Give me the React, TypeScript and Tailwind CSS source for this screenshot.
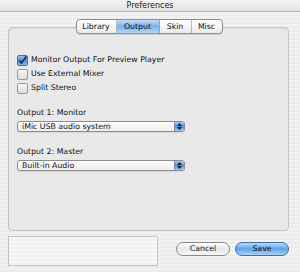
import React from 'react';

const font = { fontFamily: '"DejaVu Sans", "Liberation Sans", sans-serif' };

const Checkbox = ({ checked, label }: { checked?: boolean; label: string }) => (
  <div className="flex items-center h-[14px]">
    {checked ? (
      <svg width="11" height="11" viewBox="0 0 11 11" className="shrink-0">
        <defs>
          <linearGradient id="cb" x1="0" y1="0" x2="0" y2="1">
            <stop offset="0" stopColor="#9cc4f0" />
            <stop offset="0.5" stopColor="#4d8fe0" />
            <stop offset="1" stopColor="#8fc0f2" />
          </linearGradient>
        </defs>
        <rect x="0.5" y="0.5" width="10" height="10" rx="1.5" fill="url(#cb)" stroke="#4a6f9c" />
        <path d="M2.3 5.6 L4.4 8.2 L9.4 1.2" fill="none" stroke="#1b2a44" strokeWidth="1.6" />
      </svg>
    ) : (
      <div className="w-[11px] h-[11px] shrink-0 rounded-[2px] border border-[#9a9a9a] bg-gradient-to-b from-[#f6f6f6] to-[#dcdcdc]" />
    )}
    <span className="ml-[3px] text-[7.8px] text-[#111]">{label}</span>
  </div>
);

const Popup = ({ value }: { value: string }) => (
  <div className="flex items-center w-[168px] h-[11px] rounded-[3px] border border-[#8c8c8c] bg-gradient-to-b from-[#fdfdfd] to-[#eeeeee] shadow-[0_1px_0_#d8d8d8]">
    <span className="flex-1 pl-[4px] text-[7.8px] text-[#111] leading-none">{value}</span>
    <div className="w-[10px] h-full rounded-r-[2px] bg-gradient-to-b from-[#a6cdf4] via-[#4f92e2] to-[#9ccaf4] border-l border-[#6d8fb8] flex flex-col items-center justify-center gap-[1px]">
      <svg width="5" height="3" viewBox="0 0 5 3"><path d="M0 3 L2.5 0 L5 3Z" fill="#152238" /></svg>
      <svg width="5" height="3" viewBox="0 0 5 3"><path d="M0 0 L2.5 3 L5 0Z" fill="#152238" /></svg>
    </div>
  </div>
);

export default function App() {
  return (
    <div
      style={font}
      className="w-[300px] h-[272px] overflow-hidden flex flex-col bg-[repeating-linear-gradient(0deg,#ececec_0px,#ececec_2px,#f2f2f2_2px,#f2f2f2_4px)]"
    >
      <div className="h-[12px] shrink-0 flex items-center justify-center bg-gradient-to-b from-[#f4f4f4] to-[#e2e2e2] border-b border-[#b4b4b4]">
        <span className="text-[8px] text-[#222] leading-none">Preferences</span>
      </div>

      <div className="ml-[8px] mt-[15px] w-[281px] h-[204px] shrink-0 rounded-[4px] border border-[#c4c4c4] bg-[#e9e9e9] shadow-[inset_0_1px_2px_rgba(0,0,0,0.06)] flex flex-col">
        <div className="-mt-[9px] flex justify-center">
          <div className="flex ml-[1px] h-[15px] rounded-[4px] border border-[#8e8e8e] bg-gradient-to-b from-[#ffffff] to-[#ececec] text-[7.8px] text-[#111] overflow-hidden shadow-[0_1px_0_#cfcfcf]">
            <div className="w-[40px] flex items-center justify-center border-r border-[#b9b9b9]">Library</div>
            <div className="w-[43px] flex items-center justify-center bg-gradient-to-b from-[#c5def8] via-[#79b1ec] to-[#b6d6f7] border-r border-[#8aa7c8]">Output</div>
            <div className="w-[32px] flex items-center justify-center border-r border-[#b9b9b9]">Skin</div>
            <div className="w-[30px] flex items-center justify-center">Misc</div>
          </div>
        </div>

        <div className="pl-[8px] pt-[19px] flex flex-col">
          <Checkbox checked label="Monitor Output For Preview Player" />
          <Checkbox label="Use External Mixer" />
          <Checkbox label="Split Stereo" />

          <div className="mt-[13px] text-[7.8px] text-[#111] h-[10px] leading-[10px]">Output 1: Monitor</div>
          <div className="mt-[3px]">
            <Popup value="iMic USB audio system" />
          </div>

          <div className="mt-[15px] text-[7.8px] text-[#111] h-[10px] leading-[10px]">Output 2: Master</div>
          <div className="mt-[3px]">
            <Popup value="Built-in Audio" />
          </div>
        </div>
      </div>

      <div className="ml-[8px] mt-[5px] flex items-start">
        <div className="w-[150px] h-[30px] border border-[#c6c6c6] bg-[repeating-linear-gradient(0deg,#f1f1f1_0px,#f1f1f1_2px,#f7f7f7_2px,#f7f7f7_4px)]" />
        <div className="ml-[18px] mt-[6px] flex gap-[5px]">
          <button className="w-[54px] h-[14px] rounded-full border border-[#8a8a8a] bg-gradient-to-b from-[#ffffff] via-[#e8e8e8] to-[#f8f8f8] text-[7.8px] text-[#111] leading-none">
            Cancel
          </button>
          <button className="w-[54px] h-[14px] rounded-full border border-[#3f6ea8] bg-gradient-to-b from-[#b8d8f8] via-[#5ea2ea] to-[#a9d2f7] text-[7.8px] text-[#111] leading-none">
            Save
          </button>
        </div>
      </div>
    </div>
  );
}
